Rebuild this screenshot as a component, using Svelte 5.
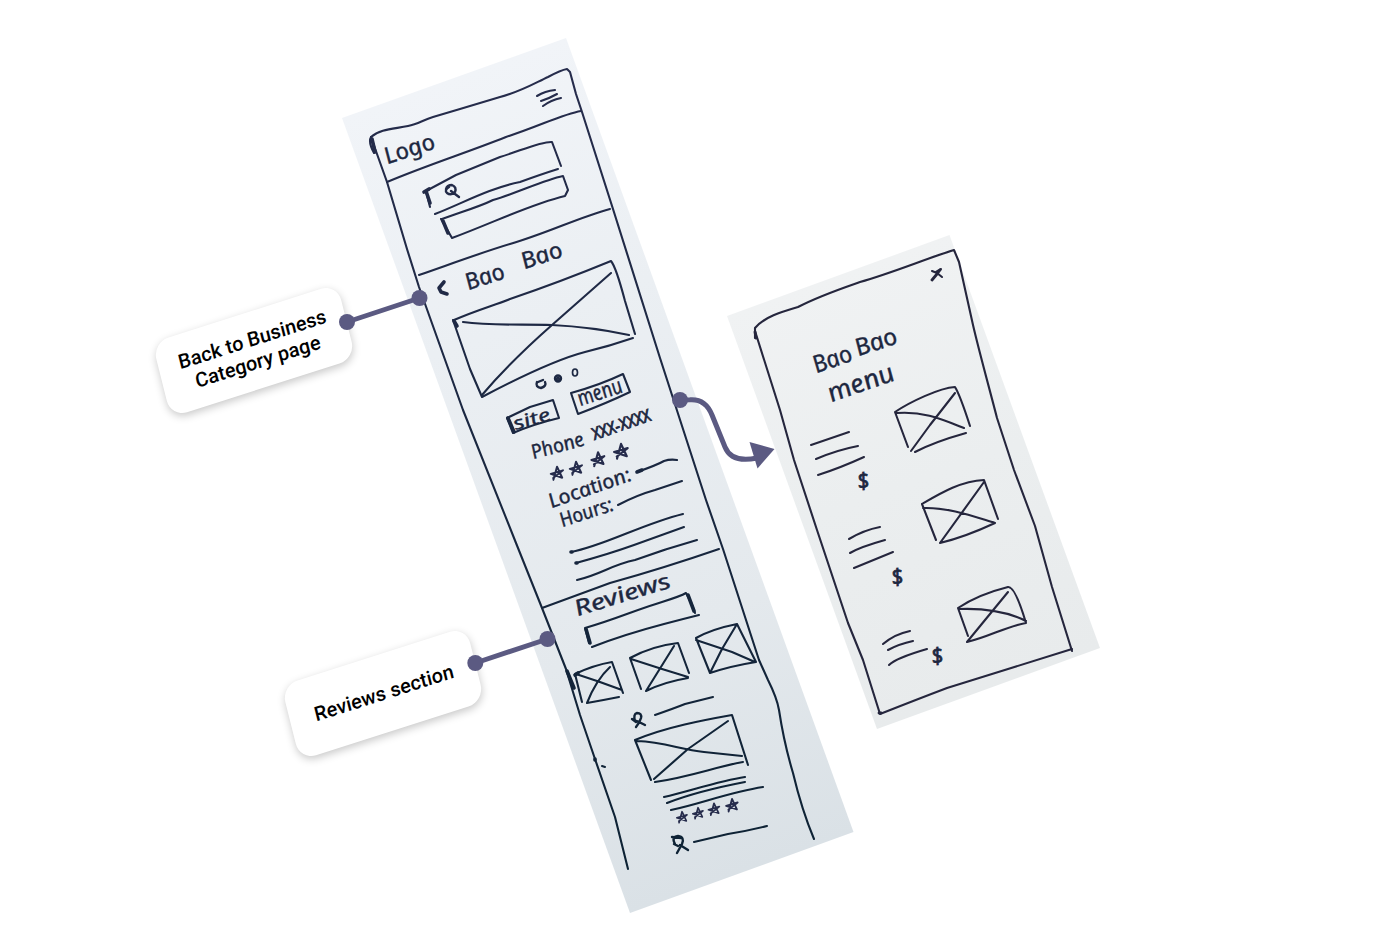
<script>
  const pagePaths = [
    'M374 153 Q368 142 371 137 C380 129 394 129 408 126 C418 124 423 120 433 117 L460 109 L500 97 C520 92 535 83 548 77 Q561 70 567 69 L570 72 L576 94 L582 112 L613 209 L660 358 L706 500 L723 549 L759 660 L768 680 Q777 698 779 710 Q784 743 793 773 C798 794 806 820 814 839',
    'M371 137 L377 154 L387 182 L407 249 L419 287 L463 410 L516 543 L542 608 L566 669 L580 715 L595 759 L615 817 L628 869',
    'M387 182 C430 164 463 154 506 137 C540 126 563 114 581 111',
    'M537 96 Q545 91 555 90 M541 101 Q550 98 557 94 M543 106 Q551 100 561 98',
    'M430 207 L426 191 L456 175 L500 157 C520 151 542 141 552 142 L561 166',
    'M435 214 C463 203 490 188 520 182 Q542 174 558 169',
    'M442 219 C461 212 479 207 493 200 C517 193 544 180 563 176 L568 190 L565 196 C531 204 495 222 452 238 L441 219',
    'M419 275 C448 265 480 253 510 244 C548 233 577 218 610 209',
    'M454 320 C474 311 492 306 510 299 Q560 282 611 261 Q616 267 625 301 L635 334',
    'M453 320 L470 369 L482 397 C518 378 558 359 585 352 Q610 346 633 338',
    'M463 322 C492 326 522 324 552 325 Q592 327 629 335',
    'M611 273 L552 325 Q510 362 482 395',
    'M507 418 L530 407 L553 400 L559 418 Q534 424 513 433 Z',
    'M571 393 Q600 385 623 374 L630 392 Q607 403 578 414 Z',
    'M637 472 Q657 465 664 461 Q670 459 677 460',
    'M618 505 Q637 495 655 490 L682 481',
    'M571 552 C604 546 642 524 683 514 M576 563 Q609 554 634 545 L684 527 M577 580 C602 574 611 565 635 560 Q665 549 697 540',
    'M542 608 L610 583 Q664 568 719 549',
    'M589 643 L585 628 C614 620 638 609 662 602 Q681 596 686 593 Q692 603 695 613',
    'M592 647 C620 636 645 629 664 624 Q683 619 699 615',
    'M582 702 L575 674 Q594 665 612 662 L623 693 M587 703 Q604 700 619 697 M610 667 Q596 680 587 703 M576 674 Q598 681 622 690',
    'M641 689 L630 658 Q652 646 678 643 L689 673 M688 678 Q664 682 646 691 L674 646 M631 659 L662 669 L688 677',
    'M710 673 L696 638 Q712 629 737 624 L756 662 Q731 666 710 673 L722 649 L737 624 M696 640 L732 652 L755 662',
    'M655 715 Q675 708 685 704 L713 697',
    'M651 780 L635 740 C666 727 704 720 732 715 L748 765 M655 782 C690 777 715 767 743 762 M637 741 C665 742 681 750 704 752 L742 756 M728 721 L688 749 L654 779',
    'M664 797 C690 791 719 781 745 777 M667 803 C690 794 719 787 745 782 M671 810 C700 804 730 792 763 787',
    'M694 842 L728 834 Q747 831 767 826'
  ];

  const heavyPaths = [
    'M372 139 L375 152', 'M424 192 L429 189 M426 191 L430 203', 'M443 221 L448 233',
    'M444 282 L439 288 L441 292 L447 294', 'M454 321 L457 326', 'M508 418 L514 432',
    'M586 629 L590 643', 'M688 595 L694 611', 'M575 675 L578 673',
    'M567 671 L574 688', 'M571 552 h1 M576 563 h1', 'M595 759 v1',
    'M637 472 L642 470'
  ];

  const menuPaths = [
    'M755 338 L755 328 C764 317 781 312 798 307 C819 296 840 289 860 282 C892 273 925 259 954 250 L959 262 L973 325 C979 351 989 387 997 418 L1014 470 L1035 526 L1052 587 L1072 651',
    'M755 331 L780 410 L794 460 L817 530 L848 623 L863 660 L880 714 Q918 699 947 688 L1008 669 L1072 649',
    'M908 447 L895 412 C910 402 939 388 955 387 Q960 395 970 426 M915 452 Q934 442 966 433 M955 393 L930 425 L911 451 M897 413 C923 411 941 419 964 428',
    'M936 540 L922 504 C941 493 961 481 984 480 L998 519 M940 543 Q965 537 995 523 M984 482 L940 543 M923 508 C948 507 975 517 995 523',
    'M968 636 L958 608 C973 598 992 591 1008 587 Q1015 586 1026 623 C1007 626 989 637 967 642 L1008 592 M959 609 C984 608 1006 611 1026 621',
    'M811 445 L849 432 M816 459 Q837 450 858 446 M818 475 Q840 468 864 457',
    'M849 539 Q864 530 880 527 M850 553 Q860 547 885 540 M854 568 L893 552',
    'M883 644 Q895 634 910 631 M888 650 Q899 644 913 641 M889 665 Q896 658 927 649'
  ];

  const words = [
    { t: 'Logo', x: 388, y: 164, w: 52, s: 23, a: -18 },
    { t: 'Bao', x: 469, y: 290, w: 40, s: 23, a: -18 },
    { t: 'Bao', x: 525, y: 269, w: 42, s: 23, a: -18 },
    { t: 'site', x: 516, y: 430, w: 38, s: 18, a: -16 },
    { t: 'menu', x: 581, y: 406, w: 46, s: 22, a: -18 },
    { t: 'Phone', x: 534, y: 459, w: 54, s: 20, a: -15 },
    { t: 'XXX-XXXX', x: 595, y: 440, w: 61, s: 17, a: -19, h: true },
    { t: 'Location:', x: 552, y: 508, w: 86, s: 20, a: -19 },
    { t: 'Hours:', x: 563, y: 527, w: 55, s: 20, a: -18 },
    { t: 'Reviews', x: 578, y: 616, w: 99, s: 22, a: -17 },
    { t: 'Bao', x: 817, y: 373, w: 40, s: 24, a: -19 },
    { t: 'Bao', x: 859, y: 356, w: 43, s: 24, a: -18 },
    { t: 'menu', x: 832, y: 402, w: 69, s: 26, a: -19 },
    { t: '$', x: 859, y: 489, w: 12, s: 22, a: -4, h: true },
    { t: '$', x: 893, y: 585, w: 12, s: 22, a: -4, h: true },
    { t: '$', x: 933, y: 664, w: 12, s: 22, a: -4, h: true }
  ];

  const stars = [
    [557, 473, 0.9], [576, 468, 0.9], [598, 459, 0.95], [621, 451, 1],
    [682, 817, 0.75], [698, 813, 0.75], [714, 809, 0.8], [732, 805, 0.85]
  ];

  const notes = [
    { lines: ['Back to Business', 'Category page'], x: 253.7, y: 350 },
    { lines: ['Reviews section'], x: 383.2, y: 693 }
  ];
</script>

<main class="board">
  <svg class="canvas" viewBox="0 0 1393 944" width="1393" height="944">
    <defs>
      <linearGradient id="paper" gradientUnits="userSpaceOnUse" x1="455" y1="78" x2="742" y2="872">
        <stop offset="0" stop-color="#f1f4f8" />
        <stop offset="0.3" stop-color="#ebeff3" />
        <stop offset="0.7" stop-color="#e4e9ed" />
        <stop offset="1" stop-color="#dae1e6" />
      </linearGradient>
      <linearGradient id="sheet" gradientUnits="userSpaceOnUse" x1="838" y1="275" x2="988" y2="688">
        <stop offset="0" stop-color="#f0f2f3" />
        <stop offset="0.5" stop-color="#ebeeef" />
        <stop offset="1" stop-color="#e8ebec" />
      </linearGradient>
      <linearGradient id="ink" gradientUnits="userSpaceOnUse" x1="0" y1="80" x2="0" y2="860">
        <stop offset="0" stop-color="#262c4c" />
        <stop offset="1" stop-color="#0d2234" />
      </linearGradient>
    </defs>

    <polygon points="342,118 566,38 853.500,832 630,913" fill="url(#paper)" />
    <polygon points="727,316 949.500,235 1100,648 877,729" fill="url(#sheet)" />

    <g class="pen" stroke="url(#ink)">
      {#each pagePaths as d}<path {d} />{/each}
      <g class="heavy">{#each heavyPaths as d}<path {d} />{/each}</g>
      <path d="M602 766 l3 1" />
      <g class="bold">
        <path d="M446 189 Q447 185 452 185 Q457 187 455 192 Q451 196 447 193 Q444 190 449 187 M451 191 L459 197" />
        <path d="M537 382 Q535 387 541 388 Q547 386 545 382 M538 382 L543 380" />
        <circle cx="558" cy="378.500" r="3" /><circle cx="558" cy="379" r="1" />
        <ellipse cx="575" cy="372.500" rx="2.500" ry="3.500" stroke-width="1.700" />
        <path d="M635 721 Q633 714 637 713 Q642 713 641 718 Q640 722 636 727 M636 721 L639 722 L645 725 M632 719 L636 722" />
        <path d="M675 844 Q671 837 678 836 Q685 837 682 844 L677 853 M680 845 L688 850 M672 837 L681 838 M674 844 L678 846" />
      </g>
      {#each stars as [x, y, s]}
        <path transform="translate({x} {y}) rotate(-8) scale({s})" stroke-width="2.200" d="M-5 7 L1 -7 L5 6 L-7 0 L7 -2 L-5 5" />
      {/each}
    </g>

    <g class="pen sheet">
      {#each menuPaths as d}<path {d} />{/each}
      <path class="thick" d="M755 332 L756 338 M879 713 h2 M932 280 L937 274 L940 270" />
      <path d="M932 271 L937 273 L942 277 M936 272 L941 269" />
    </g>

    <g class="script">
      {#each words as w}
        <text
          class:strong={w.h}
          transform="translate({w.x} {w.y}) rotate({w.a}) skewX(9)"
          font-size={w.s}
          textLength={w.w}
          lengthAdjust="spacingAndGlyphs">{w.t}</text>
      {/each}
    </g>
  </svg>

  {#each notes as n}
    <div class="note" style="left:{n.x}px; top:{n.y}px">
      {#each n.lines as line}<span>{line}</span>{/each}
    </div>
  {/each}

  <svg class="canvas" viewBox="0 0 1393 944" width="1393" height="944">
    <g class="link">
      <path d="M347 322 L419.500 298 M475.300 663 L547.500 639" />
      <path d="M680 400 L690 399.800 C701 399 708 405 712 415 L725 447 C729 457 738 462 757 458" />
    </g>
    <g fill="#5b5a82">
      <circle cx="347" cy="322" r="8" />
      <circle cx="419.500" cy="298" r="8" />
      <circle cx="475.300" cy="663" r="8" />
      <circle cx="547.500" cy="639" r="8" />
      <circle cx="680" cy="400" r="8" />
      <polygon points="774.500,449 749.500,442 757.500,468.500" />
    </g>
  </svg>
</main>

<style>
  :global(body) {
    margin: 0;
    background: #fff;
  }
  .board {
    position: relative;
    width: 1393px;
    height: 944px;
    overflow: hidden;
    background: #fff;
  }
  .canvas {
    position: absolute;
    inset: 0;
    display: block;
  }
  .pen {
    fill: none;
    stroke-width: 2.1;
    stroke-linecap: round;
    stroke-linejoin: round;
  }
  .sheet {
    stroke: #25263d;
  }
  .heavy {
    stroke-width: 3.6;
  }
  .bold {
    stroke-width: 2.4;
  }
  .thick {
    stroke-width: 2.8;
  }
  .script {
    font-family: 'Noto Sans', 'Open Sans', sans-serif;
    font-style: italic;
    fill: #1d2740;
    stroke: #1d2740;
    stroke-width: 0.35;
  }
  .strong {
    stroke-width: 0.8;
  }
  .link {
    fill: none;
    stroke: #5b5a82;
    stroke-width: 5;
  }
  .note {
    position: absolute;
    box-sizing: border-box;
    width: 194px;
    height: 77px;
    margin: -38.5px 0 0 -97px;
    padding-left: 2px;
    display: flex;
    flex-direction: column;
    align-items: center;
    justify-content: center;
    border-radius: 17px;
    background: #fff;
    box-shadow: 0 3px 8px rgba(0, 0, 0, 0.22);
    color: #000;
    font: 500 20px/23px Roboto, sans-serif;
    letter-spacing: 0.05px;
    white-space: nowrap;
    transform: matrix(0.953, -0.304, 0.242, 0.97, 0, 0);
  }
</style>
